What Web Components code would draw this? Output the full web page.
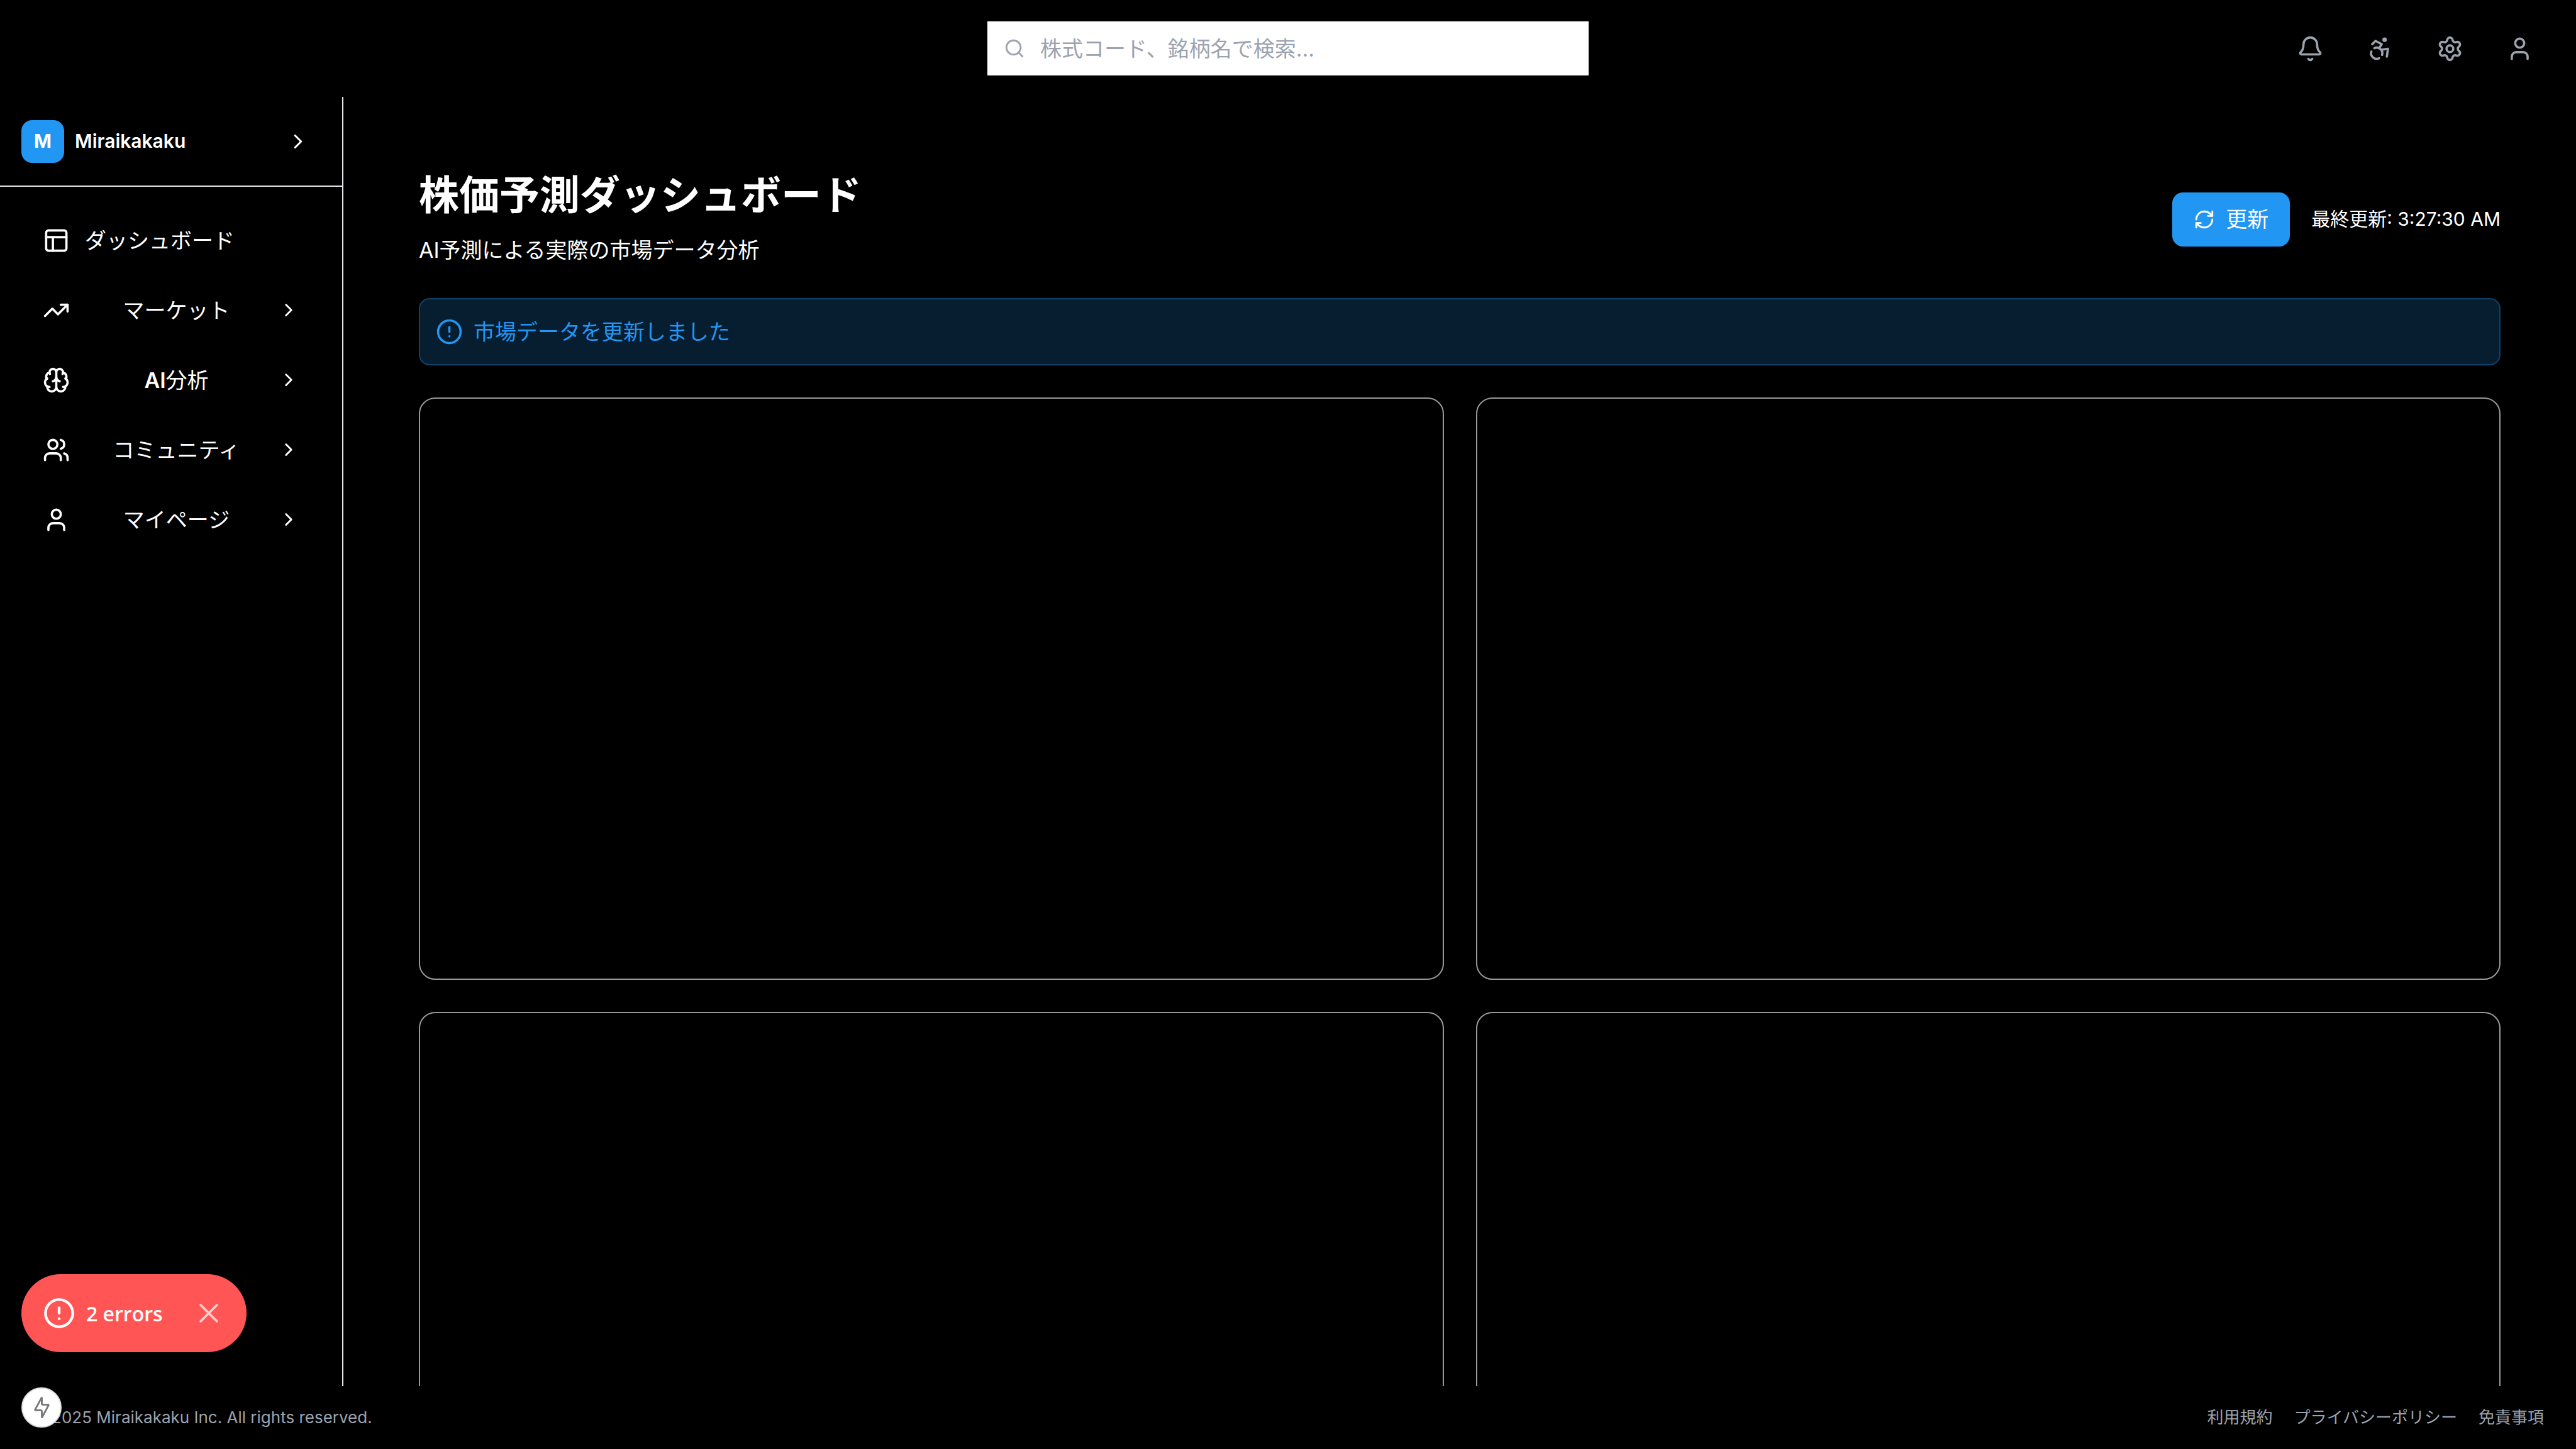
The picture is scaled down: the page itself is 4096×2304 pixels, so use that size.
<!DOCTYPE html>
<html lang="ja">
<head>
<meta charset="utf-8">
<title>Miraikakaku</title>
<style>
  html, body { margin: 0; height: 100%; background: #000; }
  body { color: #fff; font-family: Inter, "Noto Sans CJK JP", sans-serif; font-size: 34px; line-height: 51px; overflow: hidden; }
  b { font-weight: 600; }
</style>
</head>
<body>
<mk-app>
  <mk-topbar slot="top"></mk-topbar>
  <mk-sidebar slot="side">
    <mk-nav-item icon="dashboard" plain>ダッシュボード</mk-nav-item>
    <mk-nav-item icon="trend">マーケット</mk-nav-item>
    <mk-nav-item icon="brain"><b>AI</b>分析</mk-nav-item>
    <mk-nav-item icon="users">コミュニティ</mk-nav-item>
    <mk-nav-item icon="user">マイページ</mk-nav-item>
  </mk-sidebar>
  <mk-page-head heading="株価予測ダッシュボード" sub="AI予測による実際の市場データ分析" time="最終更新: 3:27:30 AM"></mk-page-head>
  <mk-notice>市場データを更新しました</mk-notice>
  <mk-grid></mk-grid>
  <mk-footer slot="bottom"></mk-footer>
  <mk-toast slot="overlay">2 errors</mk-toast>
  <mk-badge slot="overlay"></mk-badge>
</mk-app>
<script>
const ICONS = {
  search: '<path d="m21 21-4.34-4.34"/><circle cx="11" cy="11" r="8"/>',
  bell: '<path d="M10.268 21a2 2 0 0 0 3.464 0"/><path d="M3.262 15.326A1 1 0 0 0 4 17h16a1 1 0 0 0 .74-1.673C19.41 13.956 18 12.499 18 8A6 6 0 0 0 6 8c0 4.499-1.411 5.956-2.738 7.326"/>',
  access: '<circle cx="16" cy="4" r="1"/><path d="m18 19 1-7-6 1"/><path d="m5 8 3-3 5.5 3-2.36 3.5"/><path d="M4.24 14.5a5 5 0 0 0 6.88 6"/><path d="M13.76 17.5a5 5 0 0 0-6.88-6"/>',
  gear: '<path d="M9.671 4.136a2.34 2.34 0 0 1 4.659 0 2.34 2.34 0 0 0 3.319 1.915 2.34 2.34 0 0 1 2.33 4.033 2.34 2.34 0 0 0 0 3.831 2.34 2.34 0 0 1-2.33 4.033 2.34 2.34 0 0 0-3.319 1.915 2.34 2.34 0 0 1-4.659 0 2.34 2.34 0 0 0-3.32-1.915 2.34 2.34 0 0 1-2.33-4.033 2.34 2.34 0 0 0 0-3.831A2.34 2.34 0 0 1 6.35 6.051a2.34 2.34 0 0 0 3.319-1.915"/><circle cx="12" cy="12" r="3"/>',
  user: '<path d="M19 21v-2a4 4 0 0 0-4-4H9a4 4 0 0 0-4 4v2"/><circle cx="12" cy="7" r="4"/>',
  users: '<path d="M16 21v-2a4 4 0 0 0-4-4H6a4 4 0 0 0-4 4v2"/><path d="M16 3.128a4 4 0 0 1 0 7.744"/><path d="M22 21v-2a4 4 0 0 0-3-3.87"/><circle cx="9" cy="7" r="4"/>',
  dashboard: '<rect x="3" y="3" width="18" height="18" rx="2"/><path d="M3 9h18"/><path d="M9 21V9"/>',
  trend: '<path d="M16 7h6v6"/><path d="m22 7-8.5 8.5-5-5L2 17"/>',
  brain: '<path d="M12 18V5"/><path d="M15 13a4.17 4.17 0 0 1-3-4 4.17 4.17 0 0 1-3 4"/><path d="M17.598 6.5A3 3 0 1 0 12 5a3 3 0 1 0-5.598 1.5"/><path d="M17.997 5.125a4 4 0 0 1 2.526 5.77"/><path d="M18 18a4 4 0 0 0 2-7.464"/><path d="M19.967 17.483A4 4 0 1 1 12 18a4 4 0 1 1-7.967-.517"/><path d="M6 18a4 4 0 0 1-2-7.464"/><path d="M6.003 5.125a4 4 0 0 0-2.526 5.77"/>',
  chevron: '<path d="m9 18 6-6-6-6"/>',
  refresh: '<path d="M3 12a9 9 0 0 1 9-9 9.75 9.75 0 0 1 6.74 2.74L21 8"/><path d="M21 3v5h-5"/><path d="M21 12a9 9 0 0 1-9 9 9.75 9.75 0 0 1-6.74-2.74L3 16"/><path d="M8 16H3v5"/>',
  alert: '<circle cx="12" cy="12" r="10"/><path d="M12 8v4"/><path d="M12 16h.01"/>',
  close: '<path d="M5 5l14 14M19 5L5 19"/>'
};
const icon = (name, size, stroke = 2) =>
  `<svg width="${size}" height="${size}" viewBox="0 0 24 24" fill="none" stroke="currentColor" stroke-width="${stroke}" stroke-linecap="round" stroke-linejoin="round" aria-hidden="true">${ICONS[name]}</svg>`;
const RESET = `*{box-sizing:border-box} svg{display:block;flex:none} button{font:inherit;color:inherit;background:none;border:0;padding:0;margin:0;cursor:pointer} a{color:inherit;text-decoration:none}`;
const define = (tag, render) => customElements.define(tag, class extends HTMLElement {
  constructor() { super(); this.attachShadow({ mode: 'open' }); }
  connectedCallback() { this.shadowRoot.innerHTML = `<style>${RESET}</style>` + render(this); }
});

define('mk-app', () => `<style>
  :host{display:grid;height:100vh;grid-template:154px minmax(0,1fr) 100px / 546px minmax(0,1fr)}
  .top,.bottom{grid-column:1/-1}
  main{overflow:hidden;padding:120px 120px 0;display:flex;flex-direction:column;gap:51px}
  aside{min-height:0;display:grid}
</style>
<header class="top"><slot name="top"></slot></header>
<aside><slot name="side"></slot></aside>
<main><slot></slot></main>
<footer class="bottom"><slot name="bottom"></slot></footer>
<slot name="overlay"></slot>`);

define('mk-topbar', () => `<style>
  :host{display:grid;grid-template-columns:1fr 956px 1fr;align-items:center;height:154px;padding:0 51px;color:#9ca3af}
  label{display:flex;align-items:center;gap:24px;height:86px;padding:0 26px;background:#fff}
  input{flex:1;min-width:0;border:0;outline:0;padding:0;background:none;font:inherit;color:#111}
  input::placeholder{color:#9ca3af;opacity:1}
  nav{display:flex;justify-content:flex-end;gap:34px}
  nav button{padding:17px}
</style>
<span></span>
<label>${icon('search', 34)}<input type="search" aria-label="検索" placeholder="株式コード、銘柄名で検索..."></label>
<nav>
  <button aria-label="通知">${icon('bell', 43)}</button>
  <button aria-label="アクセシビリティ">${icon('access', 43)}</button>
  <button aria-label="設定">${icon('gear', 43)}</button>
  <button aria-label="アカウント">${icon('user', 43)}</button>
</nav>`);

define('mk-sidebar', () => `<style>
  :host{display:flex;flex-direction:column;border-right:2px solid #e5e7eb}
  .brand{display:flex;align-items:center;gap:17px;height:143px;padding:0 34px;border-bottom:2px solid #e5e7eb;font-size:30px;font-weight:600}
  .logo{width:68px;height:68px;border-radius:17px;background:#2196f3;display:grid;place-items:center;font-weight:700}
  .name{flex:1}
  button{padding:17px}
  nav{display:flex;flex-direction:column;gap:9px;padding:34px}
</style>
<div class="brand"><span class="logo">M</span><span class="name">Miraikakaku</span><button aria-label="折りたたむ">${icon('chevron', 38)}</button></div>
<nav><slot></slot></nav>`);

define('mk-nav-item', el => `<style>
  :host{display:block}
  a,button{display:flex;align-items:center;width:100%;height:102px;padding:0 34px;text-align:center}
  .t{flex:1;padding:0 16px 0 24px}
  a .t{text-align:left}
</style>` + (el.hasAttribute('plain')
  ? `<a href="#">${icon(el.getAttribute('icon'), 43)}<span class="t"><slot></slot></span></a>`
  : `<button>${icon(el.getAttribute('icon'), 43)}<span class="t"><slot></slot></span>${icon('chevron', 34)}</button>`));

define('mk-page-head', el => `<style>
  :host{display:flex;justify-content:space-between;align-items:center}
  h1{margin:0 0 26px;font-size:64px;line-height:72px;font-weight:700}
  p{margin:0}
  .act{display:flex;align-items:center;gap:34px}
  button{display:flex;align-items:center;gap:17px;height:86px;padding:0 34px;border-radius:17px;background:#2196f3}
  time{font-size:30px}
</style>
<div><h1>${el.getAttribute('heading')}</h1><p>${el.getAttribute('sub')}</p></div>
<div class="act"><button>${icon('refresh', 34)}<span>更新</span></button><time>${el.getAttribute('time')}</time></div>`);

define('mk-notice', () => `<style>
  :host{display:flex;align-items:center;gap:17px;padding:26px 25px;border:2px solid #0f426b;border-radius:17px;background:#071e31;color:#2196f3}
</style>${icon('alert', 43)}<span><slot></slot></span>`);

define('mk-grid', () => `<style>
  :host{display:grid;grid-template-columns:1fr 1fr;grid-auto-rows:926px;gap:51px}
  section{border:2px solid #999;border-radius:26px}
</style><section></section><section></section><section></section><section></section>`);

define('mk-footer', () => `<style>
  :host{display:flex;justify-content:space-between;align-items:center;height:100px;padding:0 51px;font-size:26px;line-height:34px;color:#9ca3af}
  nav{display:flex;gap:34px}
</style><span>© 2025 Miraikakaku Inc. All rights reserved.</span>
<nav><a href="#">利用規約</a><a href="#">プライバシーポリシー</a><a href="#">免責事項</a></nav>`);

define('mk-toast', () => `<style>
  :host{position:fixed;left:34px;bottom:154px;display:flex;align-items:center;gap:17px;height:124px;padding:0 38px 0 34px;border-radius:62px;background:#ff5555;font-family:"Open Sans",sans-serif;font-size:32px;font-weight:600}
  button{opacity:.7;padding-left:34px}
</style>${icon('alert', 52)}<span><slot></slot></span><button aria-label="閉じる">${icon('close', 44, 2)}</button>`);

define('mk-badge', () => `<style>
  :host{position:fixed;left:34px;bottom:34px}
  button{width:64px;height:64px;border-radius:50%;background:#fff;border:2px solid #ddd;display:grid;place-items:center;color:#777}
</style><button aria-label="開発ツール"><svg width="27" height="36" viewBox="84 96 104 138" fill="none" stroke="currentColor" stroke-width="11" stroke-linejoin="bevel"><path d="M136 102V140Q136 148 144 148H179L136 228V190Q136 182 128 182H93Z"/></svg></button>`);
</script>
</body>
</html>
